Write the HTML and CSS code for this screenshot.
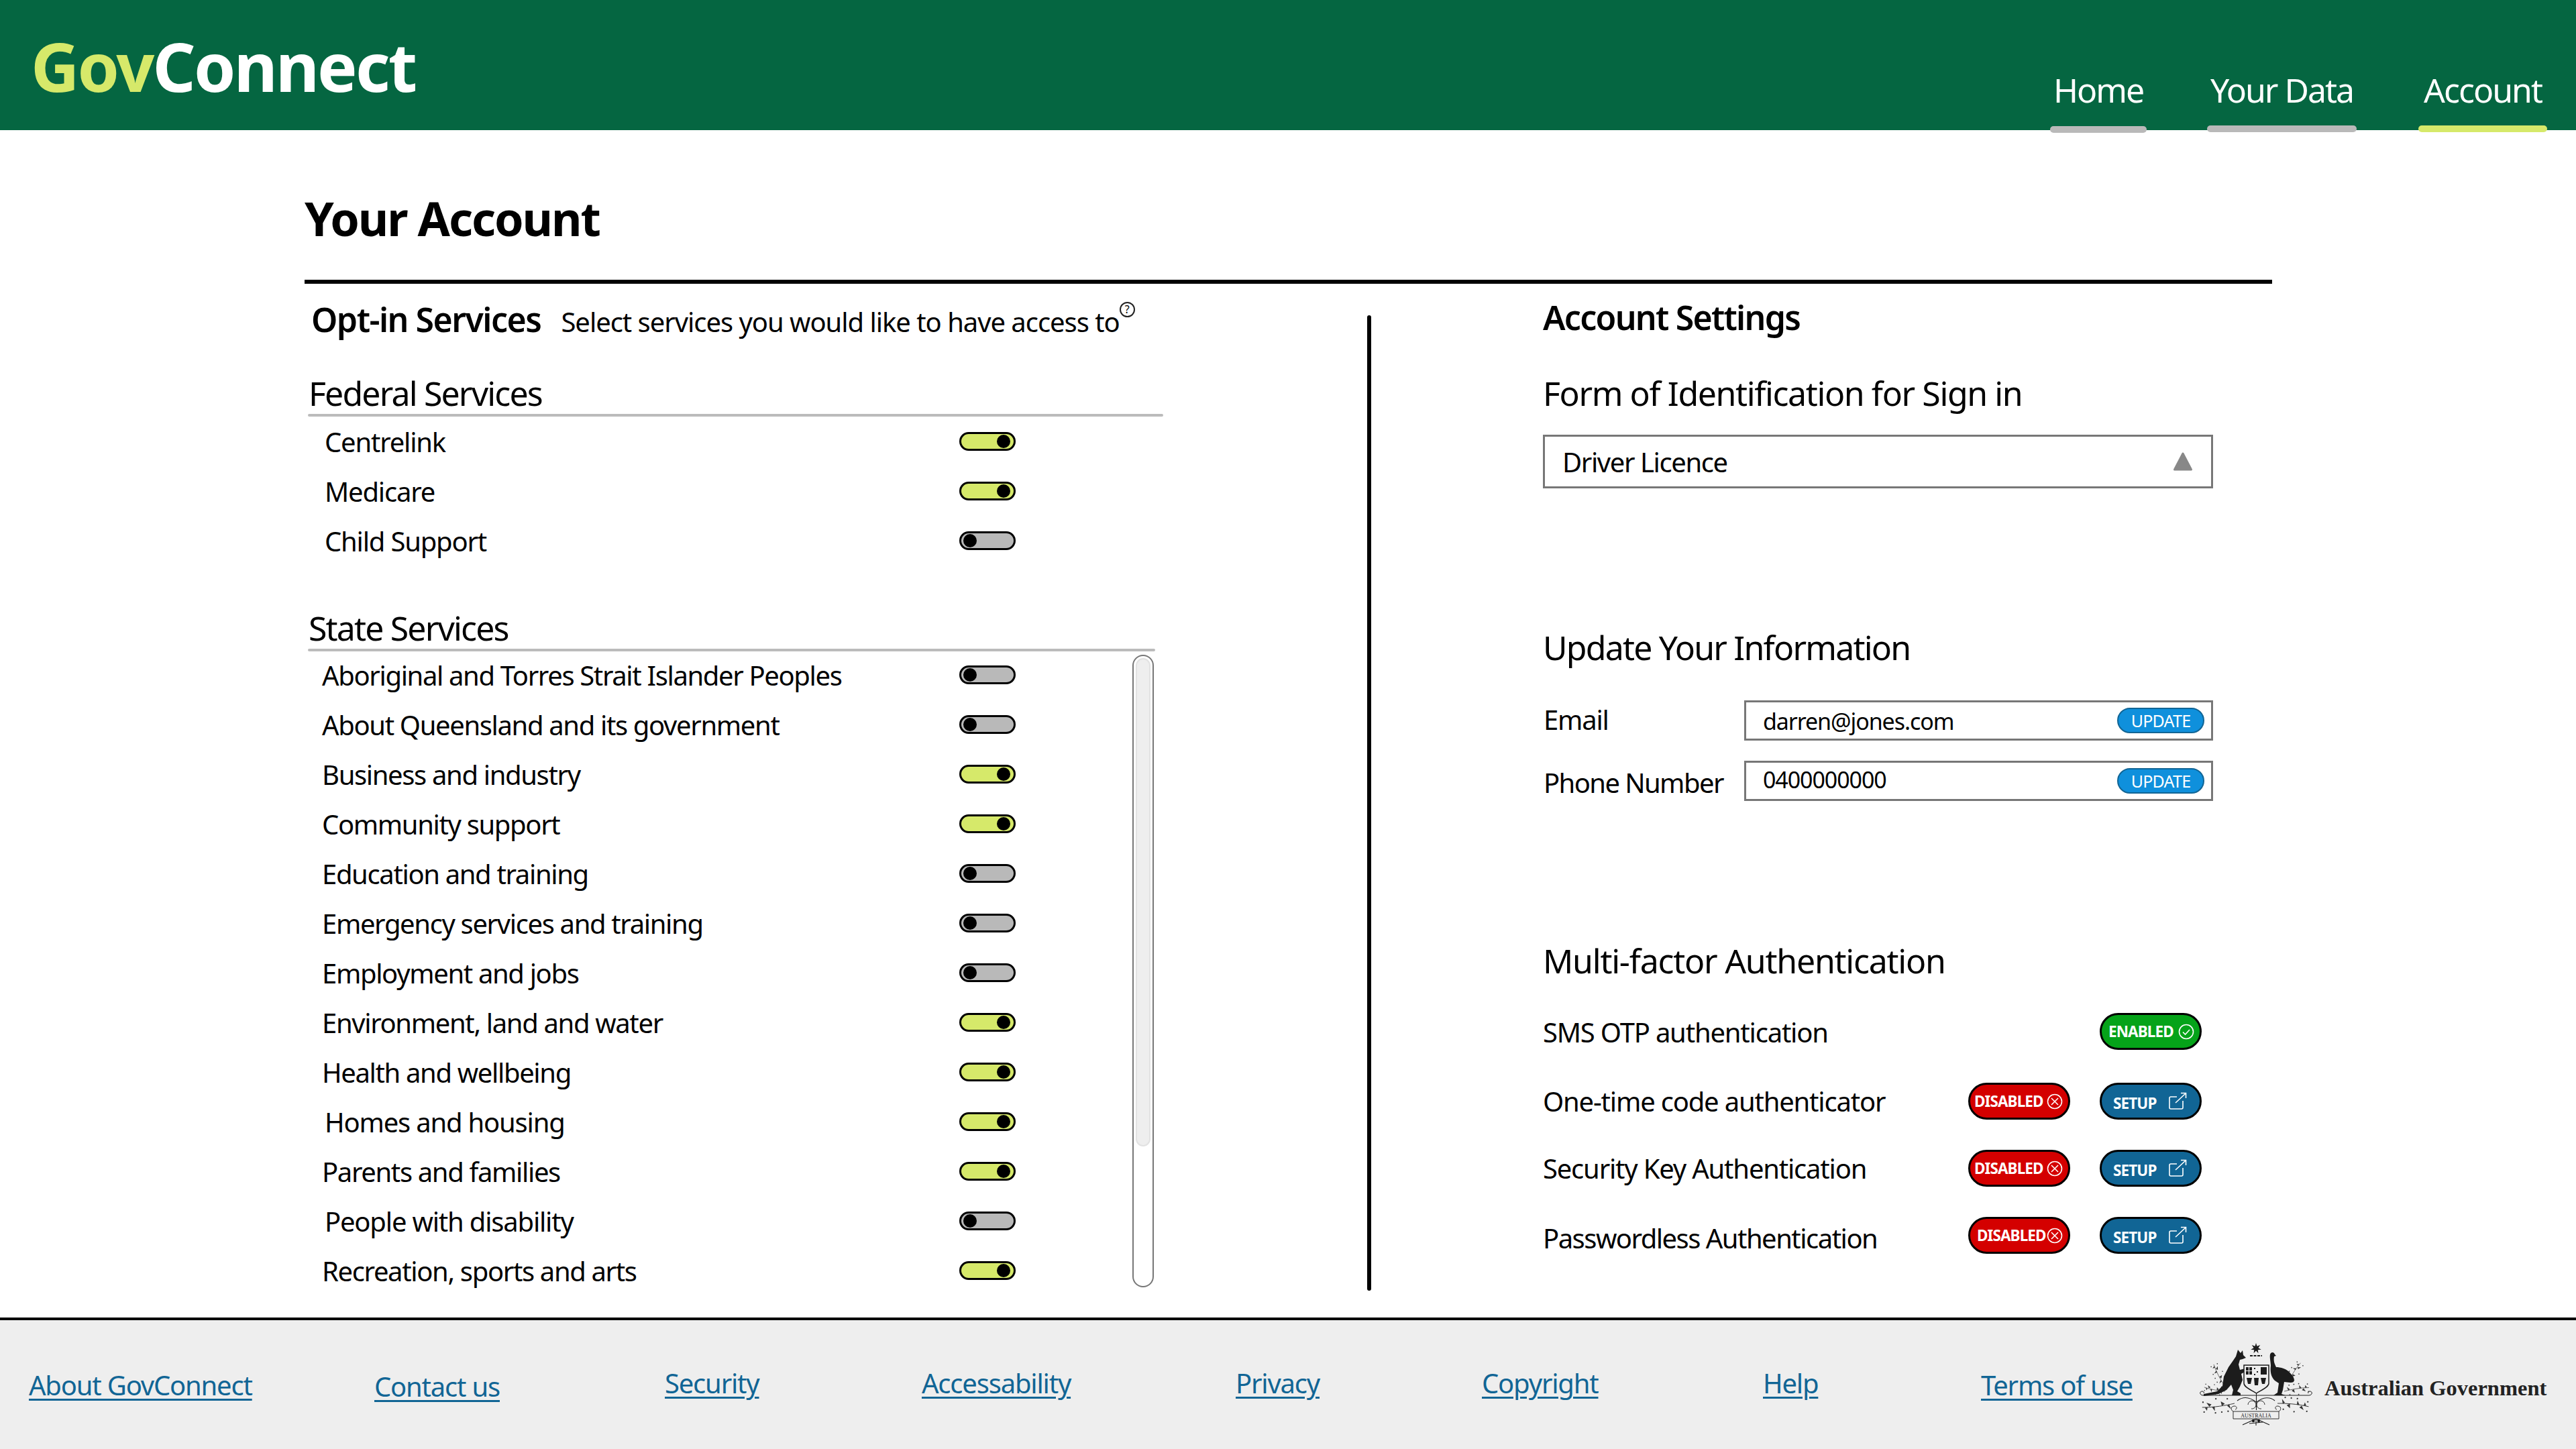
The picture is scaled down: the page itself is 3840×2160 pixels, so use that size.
FILE: index.html
```html
<!DOCTYPE html>
<html lang="en">
<head>
<meta charset="utf-8">
<title>GovConnect - Your Account</title>
<link rel="stylesheet" href="styles.css">
</head>
<body>
<header class="topbar">
  <div class="logo"><span class="logo-gov">Gov</span>Connect</div>
  <nav class="nav">
    <a class="nav-item nav-home">Home<span class="nav-bar bar-home"></span></a>
    <a class="nav-item nav-data">Your Data<span class="nav-bar"></span></a>
    <a class="nav-item nav-account">Account<span class="nav-bar bar-active"></span></a>
  </nav>
</header>
<main class="main">
  <h1 class="title">Your Account</h1>
  <div class="columns">
    <section class="left">
      <div class="optin">
        <h2 class="h-bold optin-h">Opt-in Services</h2>
        <p class="optin-note">Select services you would like to have access to</p>
        <span class="help">?</span>
      </div>
      <h3 class="h-reg group-federal">Federal Services</h3>
      <div class="rule rule-federal"></div>
      <div class="rows">
        <div class="row shift"><span>Centrelink</span><span class="toggle on"><i></i></span></div>
        <div class="row shift"><span>Medicare</span><span class="toggle on"><i></i></span></div>
        <div class="row shift"><span>Child Support</span><span class="toggle"><i></i></span></div>
      </div>
      <h3 class="h-reg group-state">State Services</h3>
      <div class="rule rule-state"></div>
      <div class="state">
        <div class="rows">
          <div class="row"><span>Aboriginal and Torres Strait Islander Peoples</span><span class="toggle"><i></i></span></div>
          <div class="row"><span>About Queensland and its government</span><span class="toggle"><i></i></span></div>
          <div class="row"><span>Business and industry</span><span class="toggle on"><i></i></span></div>
          <div class="row"><span>Community support</span><span class="toggle on"><i></i></span></div>
          <div class="row"><span>Education and training</span><span class="toggle"><i></i></span></div>
          <div class="row"><span>Emergency services and training</span><span class="toggle"><i></i></span></div>
          <div class="row"><span>Employment and jobs</span><span class="toggle"><i></i></span></div>
          <div class="row"><span>Environment, land and water</span><span class="toggle on"><i></i></span></div>
          <div class="row"><span>Health and wellbeing</span><span class="toggle on"><i></i></span></div>
          <div class="row shift"><span>Homes and housing</span><span class="toggle on"><i></i></span></div>
          <div class="row"><span>Parents and families</span><span class="toggle on"><i></i></span></div>
          <div class="row shift"><span>People with disability</span><span class="toggle"><i></i></span></div>
          <div class="row"><span>Recreation, sports and arts</span><span class="toggle on"><i></i></span></div>
        </div>
        <div class="track"><div class="thumb"></div></div>
      </div>
    </section>
    <div class="divider"></div>
    <section class="right">
      <h2 class="h-bold settings">Account Settings</h2>
      <h3 class="h-reg form-id">Form of Identification for Sign in</h3>
      <div class="select">
        <span>Driver Licence</span>
        <svg class="caret" viewBox="0 0 30 30" width="30" height="30"><polygon points="15,3 27.500,27 2.500,27" fill="#888" stroke="#888" stroke-width="3" stroke-linejoin="round"/></svg>
      </div>
      <h3 class="h-reg update-h">Update Your Information</h3>
      <div class="field field-email">
        <span class="field-label label-email">Email</span>
        <div class="input"><span class="value value-email">darren@jones.com</span><span class="update">UPDATE</span></div>
      </div>
      <div class="field field-phone">
        <span class="field-label label-phone">Phone Number</span>
        <div class="input"><span class="value value-phone">0400000000</span><span class="update">UPDATE</span></div>
      </div>
      <h3 class="h-reg mfa-h">Multi-factor Authentication</h3>
      <div class="mfa">
        <div class="mfa-row mfa-first">
          <span class="mfa-label lab-sms">SMS OTP authentication</span>
          <span></span>
          <span class="pill pill-green"><b>ENABLED</b>
            <svg class="pill-ico" viewBox="0 0 24 24" width="24" height="24"><circle cx="12" cy="12" r="10.5"/><path d="M7 12.5l3.500 3.500 6.500-7"/></svg>
          </span>
        </div>
        <div class="mfa-row">
          <span class="mfa-label">One-time code authenticator</span>
          <span class="pill pill-red"><b>DISABLED</b>
            <svg class="pill-ico" viewBox="0 0 24 24" width="24" height="24"><circle cx="12" cy="12" r="10.5"/><path d="M7 7l10 10M17 7L7 17"/></svg>
          </span>
          <span class="pill pill-blue"><b>SETUP</b>
            <svg class="pill-ext" viewBox="0 0 28 28" width="28" height="28"><path d="M12 7H3a2 2 0 0 0-2 2v14a2 2 0 0 0 2 2h16a2 2 0 0 0 2-2V13M10 16L25 2M18 1.500h7.500V9"/></svg>
          </span>
        </div>
        <div class="mfa-row">
          <span class="mfa-label">Security Key Authentication</span>
          <span class="pill pill-red"><b>DISABLED</b>
            <svg class="pill-ico" viewBox="0 0 24 24" width="24" height="24"><circle cx="12" cy="12" r="10.5"/><path d="M7 7l10 10M17 7L7 17"/></svg>
          </span>
          <span class="pill pill-blue"><b>SETUP</b>
            <svg class="pill-ext" viewBox="0 0 28 28" width="28" height="28"><path d="M12 7H3a2 2 0 0 0-2 2v14a2 2 0 0 0 2 2h16a2 2 0 0 0 2-2V13M10 16L25 2M18 1.500h7.500V9"/></svg>
          </span>
        </div>
        <div class="mfa-row">
          <span class="mfa-label lab-pwless">Passwordless Authentication</span>
          <span class="pill pill-red pill-tight"><b>DISABLED</b>
            <svg class="pill-ico" viewBox="0 0 24 24" width="24" height="24"><circle cx="12" cy="12" r="10.5"/><path d="M7 7l10 10M17 7L7 17"/></svg>
          </span>
          <span class="pill pill-blue"><b>SETUP</b>
            <svg class="pill-ext" viewBox="0 0 28 28" width="28" height="28"><path d="M12 7H3a2 2 0 0 0-2 2v14a2 2 0 0 0 2 2h16a2 2 0 0 0 2-2V13M10 16L25 2M18 1.500h7.500V9"/></svg>
          </span>
        </div>
      </div>
    </section>
  </div>
</main>
<footer class="footer">
  <a class="flink">About GovConnect</a>
  <a class="flink f-low">Contact us</a>
  <a class="flink f-up">Security</a>
  <a class="flink f-up">Accessability</a>
  <a class="flink f-up">Privacy</a>
  <a class="flink f-up">Copyright</a>
  <a class="flink f-up">Help</a>
  <a class="flink">Terms of use</a>
  <div class="gov">
    <svg class="crest" viewBox="0 0 172 125" width="172" height="125">
      <defs>
        <g id="spray">
          <path d="M0 0C10-4 22-8 36-10" fill="none" stroke="#333" stroke-width=".7"/>
          <path d="M6-2l-3-5 5 3zM22-7l-1-5 4 4zM30-9l0-4 3 3zM14-5l2 5-5-2zM28-8l4 4-6-1z" fill="#333"/>
          <g fill="#333"><circle cx="6" cy="-10" r=".9"/><circle cx="13" cy="-12" r=".9"/><circle cx="20" cy="-14" r=".9"/><circle cx="33" cy="-15" r=".9"/><circle cx="9" cy="4" r=".9"/><circle cx="22" cy="2" r=".9"/><circle cx="36" cy="-4" r=".9"/></g>
        </g>
      </defs>
      <polygon fill="#1c1c1c" points="86,0 87.500,4.850 92.250,3 89.410,7.220 93.800,9.780 88.730,10.190 89.470,15.200 86,11.500 82.530,15.200 83.270,10.190 78.200,9.780 82.590,7.220 79.750,3 84.500,4.850"/>
      <path d="M77 19h18" stroke="#1c1c1c" stroke-width="2" stroke-dasharray="4 1.500"/>
      <use href="#spray" transform="translate(38 62) rotate(-101) scale(.9)"/>
      <use href="#spray" transform="translate(134 58) rotate(-41.500) scale(.9)"/>
      <use href="#spray" transform="translate(40 72) rotate(-153.500) scale(.85)"/>
      <use href="#spray" transform="translate(128 72) rotate(7)"/>
      <use href="#spray" transform="translate(54 90) rotate(188.500) scale(1.300)"/>
      <use href="#spray" transform="translate(118 90) rotate(21.500) scale(1.250)"/>
      <path fill="#1c1c1c" d="M59 10L63 15 66 11 67 18 71 22 66 24 62 25 60 32 62 40 70 38 71 42 64 46 66 55 62 65 58 72 63 75 63 78 50 78 52 70 49 62 42 70 30 76 8 79 8 76 28 72 36 64 38 50 45 36 52 26 56 20Z"/>
      <path fill="#1c1c1c" d="M107 17C108 13 113 13 114 17L116 19 113 20C112 26 113 30 116 36 122 36 132 38 138 46 142 50 144 54 142 58 138 60 132 58 128 58L126 70 124 76 130 78 112 78 118 74 120 60 114 56C108 50 107 42 108 34 108 28 106 22 107 17Z"/>
      <path d="M7 78H165" stroke="#1c1c1c" stroke-width="1.200" fill="none"/>
      <path d="M7 78c-5 0-6-6-1-6 2 0 3 2 2 3M165 78c5 0 6-6 1-6-2 0-3 2-2 3" stroke="#1c1c1c" stroke-width="1" fill="none"/>
      <path d="M68 33H105V60C105 66 94 70 86.500 75 79 70 68 66 68 60Z" fill="#eee" stroke="#1c1c1c" stroke-width="1.500"/>
      <g fill="#1c1c1c">
        <rect x="71" y="36" width="9" height="11"/><rect x="93" y="36" width="9" height="11"/>
        <rect x="83" y="37" width="2" height="2"/><rect x="87" y="42" width="2" height="2"/><rect x="83" y="46" width="2" height="2"/>
        <path d="M72 52l8 0-2 9-4 0zM83 52l7 0-1 11-5 0zM93 52l8 0-2 9-4 0z"/>
      </g>
      <path d="M71 41.500h9M75.500 36v11" stroke="#eee" stroke-width="1.200"/>
      <path d="M86.500 75V100M86 88C76 80 66 80 58 86M87 88C97 80 107 80 114 86" stroke="#1c1c1c" stroke-width="1.100" fill="none"/>
      <path d="M74 92a6 6 0 1 1 5 6M99 92a6 6 0 1 0-5 6" stroke="#1c1c1c" stroke-width=".9" fill="none"/>
      <path d="M52 102h68v11H52zM52 102c-4-2-4-8 2-8 4 0 4 5 1 5M120 102c4-2 4-8-2-8-4 0-4 5-1 5" fill="#eee" stroke="#1c1c1c" stroke-width=".9"/>
      <text class="crest-text" x="86" y="111" text-anchor="middle">AUSTRALIA</text>
      <path d="M86 113L66 122M86 113L106 122M86 113v10M76 120l20-2" stroke="#1c1c1c" stroke-width="1.100" fill="none"/>
      <circle cx="82" cy="116" r="2.200" fill="#1c1c1c"/><circle cx="90" cy="116" r="2.200" fill="#1c1c1c"/>
    </svg>
    <span class="gov-text">Australian Government</span>
  </div>
</footer>
</body>
</html>
```
FILE: styles.css
```css
* { box-sizing: border-box; }
html, body { margin: 0; padding: 0; }
body {
  width: 3840px;
  height: 2160px;
  display: flex;
  flex-direction: column;
  overflow: hidden;
  background: #fff;
  color: #000;
  font-family: "Noto Sans", "Open Sans", sans-serif;
  font-size: 40px;
  letter-spacing: -0.03em;
}
h1, h2, h3, p { margin: 0; font: inherit; letter-spacing: inherit; }
i { display: block; }

/* header */
.topbar {
  flex: 0 0 194px;
  height: 194px;
  background: #056641;
  display: flex;
  justify-content: space-between;
  align-items: flex-start;
  color: #fff;
}
.logo {
  margin: 38px 0 0 46px;
  font-size: 100px;
  line-height: 120px;
  font-weight: 700;
  letter-spacing: -0.028em;
}
.logo-gov { color: #d6e96a; }
.nav { display: flex; margin-right: 43px; }
.nav-item {
  display: flex;
  flex-direction: column;
  align-items: center;
  font-size: 50px;
  line-height: 60px;
  letter-spacing: -0.04em;
  padding-top: 104px;
  margin-left: 90px;
}
.nav-home { width: 144px; }
.nav-data { width: 223px; }
.nav-account { width: 192px; margin-left: 92px; }
.nav-bar {
  display: block;
  width: 100%;
  height: 10px;
  margin-top: 23px;
  border-radius: 5px;
  background: #b9b9b9;
}
.bar-home { margin-top: 24px; }
.bar-active { background: #d6e96a; }

/* main */
.main { flex: 1 1 auto; min-height: 0; padding-left: 454px; overflow: hidden; }
.title {
  width: 2933px;
  height: 229px;
  padding-top: 91px;
  border-bottom: 6px solid #000;
  font-size: 70px;
  line-height: 80px;
  font-weight: 700;
  letter-spacing: -0.03em;
}
.columns { display: grid; grid-template-columns: 1584px 6px 1255px; }
.right { margin-left: 256px; }
.h-bold { font-size: 50px; line-height: 60px; font-weight: 600; letter-spacing: -0.035em; }
.h-reg { font-size: 50px; line-height: 60px; letter-spacing: -0.037em; }

/* left column */
.left { padding-top: 23px; }
.optin { display: flex; align-items: baseline; padding-left: 10px; height: 60px; }
.optin-h { letter-spacing: -0.03em; }
.optin-note { font-size: 40px; margin-left: 30px; letter-spacing: -0.026em; }
.help {
  align-self: flex-start;
  width: 23px;
  height: 23px;
  margin: 4px 0 0 0;
  border: 2px solid #222;
  border-radius: 50%;
  font-size: 16px;
  line-height: 19px;
  letter-spacing: 0;
  text-align: center;
}
.group-federal { margin-top: 50px; padding-left: 6px; }
.group-state { margin-top: 63px; padding-left: 6px; }
.rule { height: 4px; margin: 1px 0 0 5px; border-radius: 2px; background: #bbb; }
.rule-federal { width: 1275px; }
.rule-state { width: 1263px; }
.rows { display: flex; flex-direction: column; }
.row {
  height: 74px;
  width: 1055px;
  margin-left: 5px;
  padding-left: 21px;
  display: flex;
  align-items: center;
  justify-content: space-between;
  letter-spacing: -0.034em;
}
.shift { padding-left: 25px; letter-spacing: -0.03em; }
.toggle {
  flex: 0 0 84px;
  height: 28px;
  display: flex;
  align-items: center;
  padding: 0 3px;
  border: 3px solid #000;
  border-radius: 14px;
  background: #b9b9b9;
}
.toggle i { width: 20px; height: 20px; border-radius: 50%; background: #000; }
.toggle.on { justify-content: flex-end; padding-right: 5px; background: #d6e96a; }
.state { display: flex; margin-top: -2px; height: 960px; align-items: flex-start; }
.track {
  width: 32px;
  height: 943px;
  margin: 7px 0 0 174px;
  padding: 3px;
  border: 2px solid #777;
  border-radius: 16px;
}
.thumb {
  width: 22px;
  height: 728px;
  border: 2px solid #e2e2e2;
  border-radius: 11px;
  background: #eee;
}
.divider { width: 6px; height: 1454px; margin-top: 47px; border-radius: 3px; background: #000; }

/* right column */
.right { padding-top: 20px; }
.form-id { margin-top: 53px; letter-spacing: -0.028em; }
.select {
  height: 80px;
  margin-top: 32px;
  padding: 0 27px 0 26px;
  display: flex;
  align-items: center;
  justify-content: space-between;
  border: 3px solid #777;
  letter-spacing: -0.035em;
}
.update-h { margin-top: 207px; letter-spacing: -0.036em; }
.field { display: flex; align-items: center; }
.field-email { margin-top: 49px; height: 60px; }
.field-phone { margin-top: 30px; height: 60px; }
.field-label { flex: 0 0 300px; padding-left: 1px; }
.label-email { padding-bottom: 3px; }
.label-phone { padding-top: 5px; letter-spacing: -0.04em; }
.input {
  flex: 1 1 auto;
  height: 100%;
  display: flex;
  align-items: center;
  justify-content: space-between;
  padding: 0 10px 0 25px;
  border: 3px solid #777;
  font-size: 34px;
  letter-spacing: -0.032em;
}
.value-email { padding-top: 2px; }
.value-phone { padding-bottom: 4px; }
.update {
  width: 130px;
  height: 38px;
  border: 2px solid #116595;
  border-radius: 19px;
  background: #0f90dc;
  color: #fff;
  font-size: 25px;
  line-height: 34px;
  letter-spacing: -0.03em;
  text-align: center;
}
.mfa-h { margin-top: 208px; letter-spacing: -0.025em; }
.mfa { margin-top: 48px; display: flex; flex-direction: column; row-gap: 45px; }
.mfa-row {
  display: grid;
  grid-template-columns: 634px 196px 152px;
  grid-template-rows: 55px;
  align-items: center;
  height: 55px;
}
.mfa-first { margin-bottom: 4px; }
.mfa-label { line-height: 44px; }
.lab-sms { padding-top: 2px; }
.lab-pwless { padding-top: 8px; letter-spacing: -0.038em; }
.pill {
  height: 55px;
  width: 152px;
  display: flex;
  align-items: center;
  border: 3px solid #000;
  border-radius: 28px;
  color: #fff;
  font-size: 22.500px;
  letter-spacing: -0.04em;
}
.pill b { font-weight: 700; }
.pill-green { background: #05a319; padding-left: 10px; justify-content: space-between; padding-right: 8px; }
.pill-red { background: #d40000; padding-left: 6px; justify-content: space-between; padding-right: 8px; }
.pill-tight { padding-left: 10px; }
.pill-blue { background: #116595; padding-left: 17px; justify-content: space-between; padding-right: 18px; }
.pill-ico { fill: none; stroke: #fff; stroke-width: 1.6; flex: none; }
.pill-ext { fill: none; stroke: #fff; stroke-width: 1.6; flex: none; margin-top: 1px; }
.pill-blue b { margin-top: 6px; }

/* footer */
.footer {
  flex: 0 0 196px;
  border-top: 4px solid #000;
  background: #eee;
  display: grid;
  grid-template-columns: 515px 433px 383px 468px 367px 419px 325px 324px 1fr;
  padding-left: 43px;
  align-items: start;
}
.flink {
  margin-top: 72px;
  font-size: 40px;
  line-height: 50px;
  color: #116595;
  text-decoration: underline;
  text-decoration-thickness: 3px;
  text-underline-offset: 5px;
  justify-self: start;
}
.f-low { margin-top: 74px; }
.f-up { margin-top: 69px; }
.gov { display: flex; align-items: flex-start; padding-top: 34px; }
.crest { flex: none; }
.crest-text { font-family: "Liberation Serif", serif; font-size: 8px; letter-spacing: 0; fill: #1c1c1c; }
.gov-text {
  margin: 47px 0 0 16px;
  font-family: "Liberation Serif", serif;
  font-weight: 700;
  font-size: 32.500px;
  line-height: 40px;
  letter-spacing: 0;
  color: #222;
  white-space: nowrap;
}
```
